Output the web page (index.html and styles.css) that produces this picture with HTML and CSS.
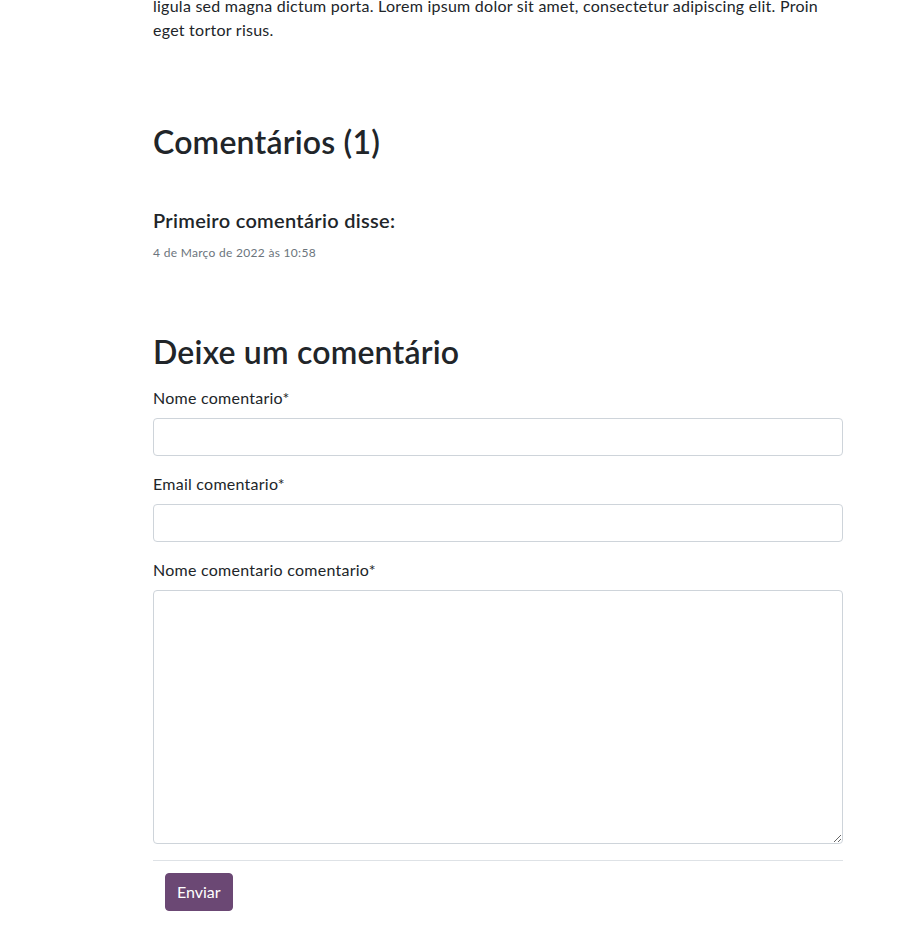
FILE: index.html
```html
<!DOCTYPE html>
<html lang="pt">
<head>
<meta charset="utf-8">
<link rel="stylesheet" href="styles.css">
</head>
<body>
<main class="content">
  <p class="post-text">ligula sed magna dictum porta. Lorem ipsum dolor sit amet, consectetur adipiscing elit. Proin eget tortor risus.</p>

  <section class="comments">
    <h2 class="section-title">Comentários (1)</h2>
    <div class="comment">
      <h5 class="comment-author">Primeiro comentário disse:</h5>
      <small class="comment-date">4 de Março de 2022 às 10:58</small>
    </div>
  </section>

  <section class="reply">
    <h2 class="section-title reply-title">Deixe um comentário</h2>
    <form class="reply-form">
      <div class="field">
        <label class="field-label">Nome comentario*</label>
        <input class="field-input" type="text">
      </div>
      <div class="field">
        <label class="field-label">Email comentario*</label>
        <input class="field-input" type="email">
      </div>
      <div class="field">
        <label class="field-label">Nome comentario comentario*</label>
        <textarea class="field-input field-textarea"></textarea>
      </div>
      <hr class="divider">
      <button class="btn-submit" type="button">Enviar</button>
    </form>
  </section>
</main>
</body>
</html>
```
FILE: styles.css
```css
* { box-sizing: border-box; }
html, body {
  margin: 0;
  padding: 0;
  background: #fff;
}
body {
  font-family: "Segoe UI", Lato, sans-serif;
  font-size: 16px;
  line-height: 1.5;
  letter-spacing: 0.25px;
  color: #212529;
}
.content {
  width: 690px;
  margin: -6px 0 0 153px;
}
.post-text {
  margin: 0 0 16px;
}
.section-title {
  font-size: 32px;
  font-weight: 600;
  line-height: 1.2;
  letter-spacing: 0.2px;
  margin: 0;
}
.comments .section-title {
  margin-top: 81px;
}
.comment {
  margin-top: 47px;
}
.comment-author {
  font-size: 20px;
  font-weight: 600;
  line-height: 1.2;
  letter-spacing: 0.3px;
  margin: 0 0 12px;
}
.comment-date {
  display: block;
  font-size: 12px;
  line-height: 18px;
  letter-spacing: 0.3px;
  color: #6c757d;
}
.reply-title {
  margin-top: 71px;
}
.reply-form {
  margin-top: 14px;
}
.field {
  margin-bottom: 16px;
}
.field-label {
  display: block;
  margin-bottom: 8px;
}
.field-input {
  display: block;
  width: 100%;
  height: 38px;
  padding: 6px 12px;
  font: inherit;
  color: #212529;
  background: #fff;
  border: 1px solid #ced4da;
  border-radius: 4px;
}
.field-textarea {
  height: 254px;
  resize: vertical;
}
.divider {
  border: 0;
  border-top: 1px solid #dee2e6;
  margin: 0 0 12px;
}
.btn-submit {
  margin-left: 12px;
  height: 38px;
  padding: 0 11px;
  font: inherit;
  letter-spacing: 0;
  color: #fff;
  background: #6b4874;
  border: 1px solid #6b4874;
  border-radius: 4px;
}
```
